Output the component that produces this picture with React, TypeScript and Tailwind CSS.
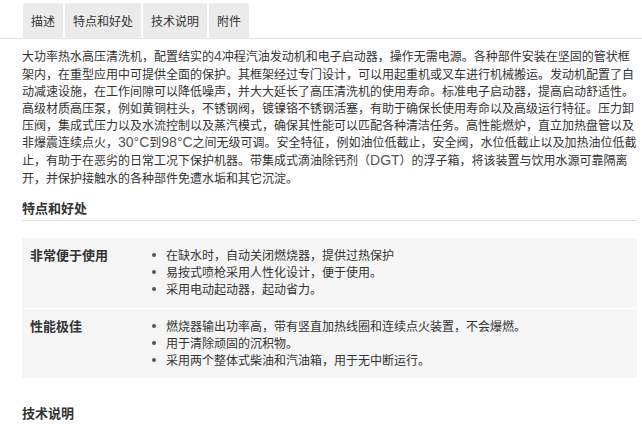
import React from "react";

const cjk = "font-['Noto_Sans_CJK_SC','Noto_Sans',sans-serif]";

function Lat({ children }: { children: React.ReactNode }) {
  return (
    <span className="font-['Liberation_Sans','Noto_Sans_CJK_SC',sans-serif] text-[14px] text-[#555]">
      {children}
    </span>
  );
}

const rows = [
  {
    label: "非常便于使用",
    items: [
      "在缺水时，自动关闭燃烧器，提供过热保护",
      "易按式喷枪采用人性化设计，便于使用。",
      "采用电动起动器，起动省力。",
    ],
  },
  {
    label: "性能极佳",
    items: [
      "燃烧器输出功率高，带有竖直加热线圈和连续点火装置，不会爆燃。",
      "用于清除顽固的沉积物。",
      "采用两个整体式柴油和汽油箱，用于无中断运行。",
    ],
  },
];

export default function App() {
  return (
    <div className={`w-[642px] h-[424px] overflow-hidden bg-white text-[#333] text-[12px] leading-[17px] ${cjk}`}>
      <div className="flex gap-[2px] pt-[3px] pl-[23px] border-b border-[#e4e4e4]">
        {["描述", "特点和好处", "技术说明", "附件"].map((t) => (
          <div key={t} className="h-[35px] leading-[35px] px-[8px] bg-[#ebebeb] text-[#333]">
            {t}
          </div>
        ))}
      </div>

      <div className="pl-[22px] w-[637px]">
        <p className="mt-[8px] whitespace-nowrap">
          大功率热水高压清洗机，配置结实的<Lat>4</Lat>冲程汽油发动机和电子启动器，操作无需电源。各种部件安装在坚固的管状框
          <br />
          架内，在重型应用中可提供全面的保护。其框架经过专门设计，可以用起重机或叉车进行机械搬运。发动机配置了自
          <br />
          动减速设施，在工作间隙可以降低噪声，并大大延长了高压清洗机的使用寿命。标准电子启动器，提高启动舒适性。
          <br />
          高级材质高压泵，例如黄铜柱头，不锈钢阀，镀镍铬不锈钢活塞，有助于确保长使用寿命以及高级运行特征。压力卸
          <br />
          压阀，集成式压力以及水流控制以及蒸汽模式，确保其性能可以匹配各种清洁任务。高性能燃炉，直立加热盘管以及
          <br />
          非爆震连续点火，<Lat>30°C</Lat>到<Lat>98°C</Lat>之间无级可调。安全特征，例如油位低截止，安全阀，水位低截止以及加热油位低截
          <br />
          止，有助于在恶劣的日常工况下保护机器。带集成式滴油除钙剂（<Lat>DGT</Lat>）的浮子箱，将该装置与饮用水源可靠隔离
          <br />
          开，并保护接触水的各种部件免遭水垢和其它沉淀。
        </p>

        <h2 className="mt-[13px] pb-[4px] border-b border-[#e0e0e0] text-[13px] font-bold leading-[17px]">
          特点和好处
        </h2>

        <div className="mt-[17px] bg-[#f6f6f6]">
          {rows.map((r, i) => (
            <div
              key={r.label}
              className={`flex pl-[8px] pt-[8px] ${i === 0 ? "pb-[11px]" : "pb-[10px] border-t border-white"}`}
            >
              <div className="w-[120px] shrink-0 text-[13px] font-bold">{r.label}</div>
              <ul className="flex flex-col">
                {r.items.map((it) => (
                  <li key={it} className="flex items-center">
                    <span className="ml-[2px] w-[4px] h-[4px] rounded-full bg-[#555]" />
                    <span className="ml-[10px]">{it}</span>
                  </li>
                ))}
              </ul>
            </div>
          ))}
        </div>

        <h2 className="mt-[26px] pb-[3px] border-b border-[#e0e0e0] text-[13px] font-bold leading-[17px]">
          技术说明
        </h2>
      </div>
    </div>
  );
}
